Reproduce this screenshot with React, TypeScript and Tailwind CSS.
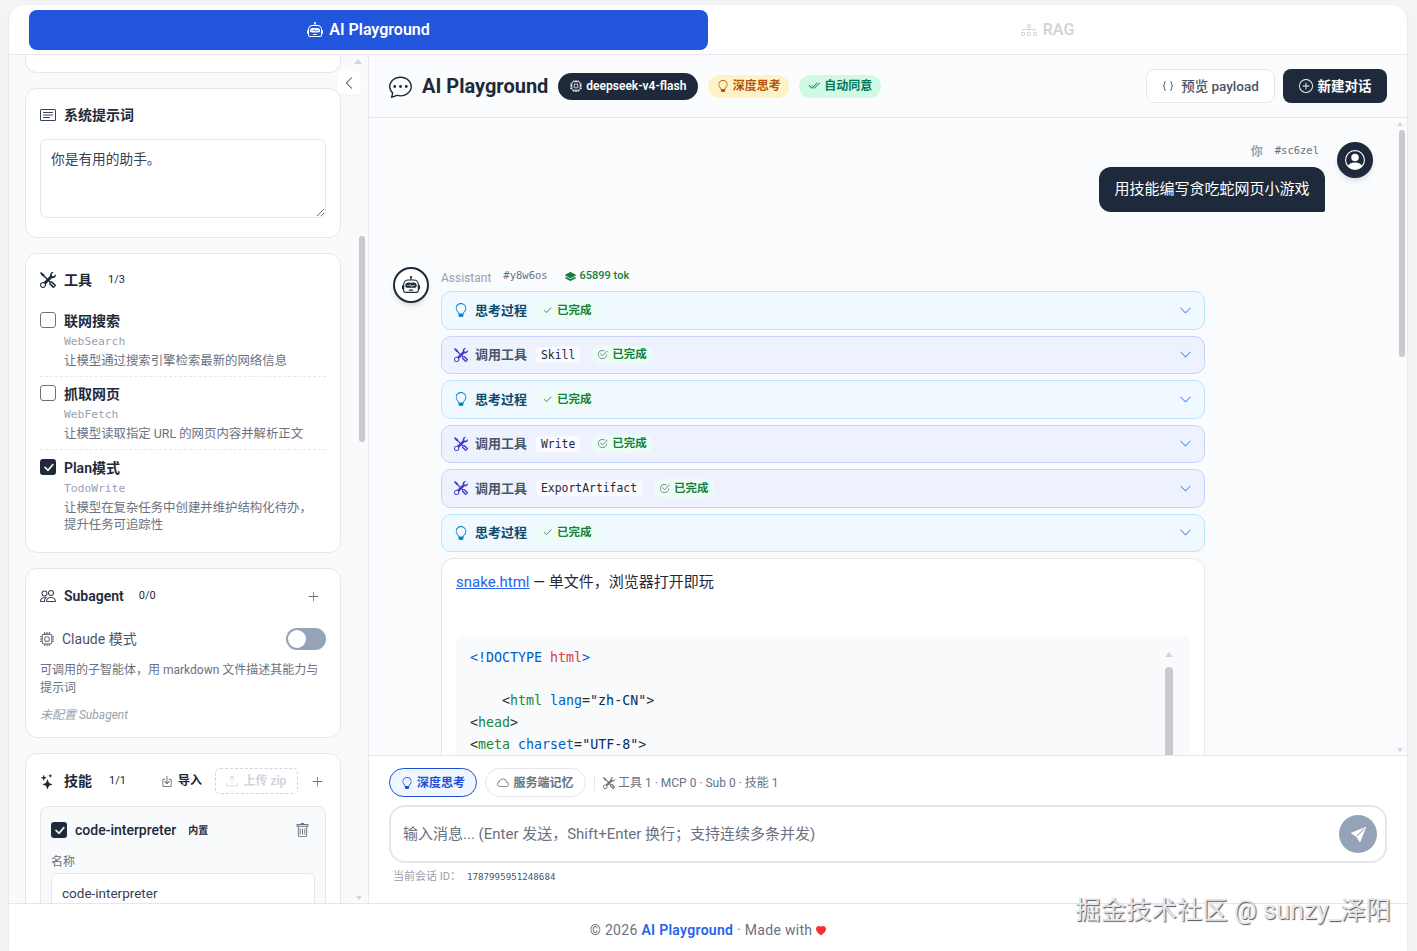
import { ReactNode } from "react";
import {
  BsBoxArrowInDown,
  BsBraces,
  BsCardText,
  BsChatDots,
  BsCheck2,
  BsCheck2All,
  BsCheck2Circle,
  BsCheckLg,
  BsChevronDown,
  BsChevronLeft,
  BsCloud,
  BsCpu,
  BsDiagram3,
  BsHeartFill,
  BsLayersFill,
  BsLightbulb,
  BsPeople,
  BsPersonCircle,
  BsPlusCircle,
  BsPlusLg,
  BsRobot,
  BsSendFill,
  BsStars,
  BsTools,
  BsTrash,
  BsUpload,
} from "react-icons/bs";

const sans = "font-['Roboto','Noto_Sans_CJK_SC',sans-serif]";
const mono = "font-['DejaVu_Sans_Mono','Noto_Sans_CJK_SC',monospace]";

function Card({ children, className }: { children: ReactNode; className?: string }) {
  return <div className={`shrink-0 rounded-[12px] border border-gray-200 bg-white ${className}`}>{children}</div>;
}

function Check({ on }: { on?: boolean }) {
  if (on) {
    return (
      <span className="flex h-4 w-4 shrink-0 items-center justify-center rounded-[3px] bg-[#1e293b] text-white">
        <BsCheckLg size={13} strokeWidth={0.8} />
      </span>
    );
  }
  return <span className="block h-4 w-4 shrink-0 rounded-[3px] border border-gray-500 bg-white" />;
}

function ToolOption(props: { name: string; id: string; desc: ReactNode; on?: boolean; last?: boolean; height: string }) {
  return (
    <div className={`flex gap-2 ${props.height} ${props.last ? "" : "border-b border-dashed border-gray-200"}`}>
      <div className="pt-[1px]">
        <Check on={props.on} />
      </div>
      <div>
        <div className="h-5 text-[14px] leading-5 font-semibold text-gray-800">{props.name}</div>
        <div className={`mt-[3px] h-4 text-[11.3px] leading-4 text-gray-400 ${mono}`}>{props.id}</div>
        <div className="mt-[2px] text-[12.4px] leading-[17px] text-gray-500">{props.desc}</div>
      </div>
    </div>
  );
}

function Sidebar() {
  return (
    <aside className="relative flex w-[360px] shrink-0 flex-col gap-[15px] overflow-hidden border-r border-gray-200 bg-[#f8fafc] pl-4 pr-[27px]">
      <div className="h-[18px] shrink-0 rounded-b-[12px] border border-t-0 border-gray-200 bg-white" />

      <Card className="h-[150px] px-[14px] pt-[16px]">
        <div className="flex h-5 items-center gap-2 text-[14px] font-semibold text-gray-800">
          <BsCardText size={16} className="text-gray-700" />
          系统提示词
        </div>
        <div className="relative mt-[14px] h-[79px] rounded-[6px] border border-gray-200 px-[10px] py-[9px] text-[13.7px] leading-5 text-gray-700">
          你是有用的助手。
          <svg className="absolute right-[1px] bottom-[1px] h-2 w-2 text-gray-500" viewBox="0 0 8 8" fill="none" stroke="currentColor">
            <path d="M1 8 8 1M5 8l3-3" />
          </svg>
        </div>
      </Card>

      <Card className="h-[300px] px-[14px] pt-[16px]">
        <div className="flex h-5 items-center gap-2 text-[14px] font-semibold text-gray-800">
          <BsTools size={16} />
          工具
          <span className="ml-[8px] rounded-full text-[11px] font-normal">1/3</span>
        </div>
        <div className="mt-[21px]">
          <ToolOption height="h-[66px]" name="联网搜索" id="WebSearch" desc="让模型通过搜索引擎检索最新的网络信息" />
          <div className="h-[7px]" />
          <ToolOption height="h-[66px]" name="抓取网页" id="WebFetch" desc="让模型读取指定 URL 的网页内容并解析正文" />
          <div className="h-[8px]" />
          <ToolOption
            height="h-[80px]"
            name="Plan模式"
            id="TodoWrite"
            on
            last
            desc={
              <>
                让模型在复杂任务中创建并维护结构化待办，
                <br />
                提升任务可追踪性
              </>
            }
          />
        </div>
      </Card>

      <Card className="h-[170px] px-[14px] pt-[17px]">
        <div className="flex h-5 items-center gap-2 text-[14px] font-semibold text-gray-800">
          <BsPeople size={16} className="text-gray-700" />
          Subagent
          <span className="ml-[7px] text-[11px] font-normal">0/0</span>
          <BsPlusLg size={13} className="ml-auto mr-[6px] text-gray-500" />
        </div>
        <div className="mt-[22px] flex h-[22px] items-center text-[14px] text-gray-600">
          <BsCpu size={14} className="mr-2" />
          Claude 模式
          <span className="ml-auto flex h-[22px] w-10 items-center rounded-full bg-[#94a3b8] pl-[2px]">
            <span className="h-[18px] w-[18px] rounded-full bg-white" />
          </span>
        </div>
        <div className="mt-[11px] text-[12px] leading-[18px] text-gray-500">可调用的子智能体，用 markdown 文件描述其能力与提示词</div>
        <div className="mt-[9px] text-[12px] leading-[18px] text-gray-400 italic">未配置 Subagent</div>
      </Card>

      <Card className="h-[300px] px-[14px] pt-[17px]">
        <div className="flex h-5 items-center text-[14px] font-semibold text-gray-800">
          <BsStars size={15} className="mr-[9px]" />
          <span className="text-[14px]">技能</span>
          <span className="ml-[17px] text-[11px] font-normal">1/1</span>
          <span className="ml-[35px] flex items-center gap-[5px] text-[12px]">
            <BsBoxArrowInDown size={12} className="text-gray-600" />
            导入
          </span>
          <span className="ml-[13px] flex h-[26px] w-[83px] items-center justify-center gap-[5px] rounded-[5px] border border-dashed border-gray-300 text-[12px] text-gray-300">
            <BsUpload size={12} />
            上传 zip
          </span>
          <BsPlusLg size={13} className="ml-[13px] text-gray-500" />
        </div>
        <div className="mt-[15px] rounded-[8px] border border-gray-200 bg-[#f8fafc] px-[10px] pt-[15px]">
          <div className="flex h-4 items-center">
            <Check on />
            <span className="ml-2 text-[14px] font-medium text-gray-800">code-interpreter</span>
            <span className="ml-3 text-[10px] font-semibold text-gray-800">内置</span>
            <BsTrash size={15} className="ml-auto mr-[5px] text-gray-500" />
          </div>
          <div className="mt-[16px] text-[12px] leading-4 text-gray-500">名称</div>
          <div className="mt-[3px] flex h-10 rounded-[5px] border border-gray-200 bg-white px-[10px] pt-[9px] text-[13.5px] leading-5 text-gray-700">code-interpreter</div>
        </div>
      </Card>

      {/* scrollbar */}
      <div className="absolute top-[4px] right-[6px] h-0 w-0 border-x-[4px] border-b-[5px] border-x-transparent border-b-gray-300" />
      <div className="absolute top-[181px] right-[3px] h-[206px] w-[6px] rounded-full bg-[#c8cacd]" />
      <div className="absolute right-[6px] bottom-[3px] h-0 w-0 border-x-[3px] border-t-[4px] border-x-transparent border-t-gray-300" />
    </aside>
  );
}

function Pill({ className, children }: { className: string; children: ReactNode }) {
  return <span className={`flex items-center justify-center rounded-full font-semibold ${className}`}>{children}</span>;
}

function Done({ icon, ml }: { icon: ReactNode; ml: string }) {
  return (
    <span className={`flex h-[18px] items-center gap-1 rounded-full bg-[#ecfdf5] px-[6px] text-[11.5px] font-semibold text-[#15803d] ${ml}`}>
      <span className="text-gray-500">{icon}</span>
      已完成
    </span>
  );
}

function Step({ kind, tool, height }: { kind: "think" | "tool"; tool?: string; height: string }) {
  const think = kind === "think";
  return (
    <div
      className={`flex ${height} shrink-0 items-center rounded-[10px] border pl-[12px] pr-[12px] ${
        think ? "border-[#bae6fd] bg-[#f0f9ff]" : "border-[#c7d2fe] bg-[#eef2ff]"
      }`}
    >
      {think ? <BsLightbulb size={14} className="text-[#0284c7]" /> : <BsTools size={14} className="text-[#4338ca]" />}
      <span className={`ml-[7px] text-[13px] font-semibold ${think ? "text-[#0c4a6e]" : "text-gray-600"}`}>{think ? "思考过程" : "调用工具"}</span>
      {tool && <span className={`ml-[9px] rounded-[4px] bg-white/70 px-[5px] text-[11.4px] leading-[16px] text-gray-800 ${mono}`}>{tool}</span>}
      {think ? <Done ml="ml-[9px]" icon={<BsCheck2 size={11} />} /> : <Done ml="ml-[11px]" icon={<BsCheck2Circle size={11} />} />}
      <BsChevronDown size={13} className="ml-auto text-[#3b82f6]" />
    </div>
  );
}

function Code() {
  const key = "text-[#005cc5]";
  const tag = "text-[#22863a]";
  const str = "text-[#032f62]";
  return (
    <div className={`mx-[14px] mt-[43px] h-[200px] rounded-t-[8px] bg-[#f8fafc] px-[14px] pt-[11px] text-[13.3px] leading-[21.7px] text-[#24292e] ${mono}`}>
      <div>
        <span className={key}>&lt;!DOCTYPE</span> <span className="text-[#d73a49]">html</span>
        <span className={key}>&gt;</span>
      </div>
      <div className="h-[21.7px]" />
      <div className="pl-8">
        &lt;<span className={tag}>html</span> <span className={key}>lang</span>=<span className={str}>"zh-CN"</span>&gt;
      </div>
      <div>
        &lt;<span className={tag}>head</span>&gt;
      </div>
      <div>
        &lt;<span className={tag}>meta</span> <span className={key}>charset</span>=<span className={str}>"UTF-8"</span>&gt;
      </div>
    </div>
  );
}

function Chat() {
  return (
    <main className="flex min-w-0 flex-1 flex-col">
      <header className="flex h-[63px] shrink-0 items-center border-b border-gray-200 bg-[#fbfcfe] pl-[20px] pr-[20px]">
        <BsChatDots size={23} className="text-gray-800" />
        <h1 className="ml-[10px] text-[20px] font-bold text-gray-800">AI Playground</h1>
        <Pill className="ml-[10px] h-[27px] w-[140px] gap-[4px] bg-[#1e293b] text-[12px] text-white">
          <BsCpu size={12} />
          deepseek-v4-flash
        </Pill>
        <Pill className="ml-[10px] h-[23px] w-[81px] gap-[4px] bg-[#fef3c7] text-[12px] text-[#b45309]">
          <BsLightbulb size={12} />
          深度思考
        </Pill>
        <Pill className="ml-[10px] h-[23px] w-[82px] gap-[4px] bg-[#d1fae5] text-[12px] text-[#047857]">
          <BsCheck2All size={12} />
          自动同意
        </Pill>
        <button className="ml-auto flex h-[34px] w-[129px] items-center justify-center gap-[7px] rounded-[8px] border border-gray-200 bg-white text-[13.5px] font-medium text-gray-600">
          <BsBraces size={12} />
          预览 payload
        </button>
        <button className="ml-2 flex h-[34px] w-[104px] items-center justify-center gap-[5px] rounded-[8px] bg-[#1e293b] text-[13.5px] font-bold text-white">
          <BsPlusCircle size={14} />
          新建对话
        </button>
      </header>

      <div className="relative min-h-0 flex-1 overflow-hidden bg-[#fafbfd] pl-[24px] pr-[34px] pt-[24px]">
        <div className="flex justify-end gap-3">
          <div className="flex flex-col items-end">
            <div className="flex h-[17px] items-center gap-[12px] pr-[6px]">
              <span className="mt-[3px] text-[12px] font-semibold text-gray-400">你</span>
              <span className={`text-[10.5px] text-gray-500 ${mono}`}>#sc6zel</span>
            </div>
            <div className="mt-[8px] flex h-[45px] w-[226px] items-center justify-center rounded-[12px] rounded-br-[2px] bg-[#1e293b] pb-[1px] text-[15px] text-white">用技能编写贪吃蛇网页小游戏</div>
          </div>
          <div className="flex h-9 w-9 items-center justify-center rounded-full bg-[#1e293b] text-white shadow-md">
            <BsPersonCircle size={20} />
          </div>
        </div>

        <div className="mt-[55px] flex gap-3">
          <div className="flex h-9 w-9 shrink-0 items-center justify-center rounded-full border-2 border-gray-800 bg-white text-gray-800 shadow-md">
            <BsRobot size={18} />
          </div>
          <div className="w-[764px]">
            <div className="-mt-[3px] flex h-[24px] items-center text-[12px]">
              <span className="mt-[3px] text-gray-400">Assistant</span>
              <span className={`ml-3 text-[10.5px] text-gray-500 ${mono}`}>#y8w6os</span>
              <span className="ml-[17px] flex items-center gap-1 text-[11px] font-medium text-[#15803d]">
                <BsLayersFill size={11} />
                65899 tok
              </span>
            </div>
            <div className="mt-[3px] flex flex-col gap-[6px]">
              <Step kind="think" height="h-[38.5px]" />
              <Step kind="tool" tool="Skill" height="h-[38.5px]" />
              <Step kind="think" height="h-[38.5px]" />
              <Step kind="tool" tool="Write" height="h-[38.5px]" />
              <Step kind="tool" tool="ExportArtifact" height="h-[38.5px]" />
              <Step kind="think" height="h-[38.5px]" />
              <div className="h-[260px] rounded-t-[12px] border border-gray-200 bg-white">
                <div className="px-[14px] pt-[12px] text-[15px] leading-[22px] text-gray-800">
                  <a className="text-[#2563eb] underline">snake.html</a> — 单文件，浏览器打开即玩
                </div>
                <Code />
              </div>
            </div>
          </div>
        </div>

        {/* code scrollbar */}
        <div className="absolute top-[534px] left-[796px] h-0 w-0 border-x-[4px] border-b-[5px] border-x-transparent border-b-gray-300" />
        <div className="absolute top-[549px] left-[796px] h-[100px] w-[8px] rounded-t-full bg-[#c8cacd]" />

        {/* page scrollbar */}
        <div className="absolute top-[4px] right-[4px] h-0 w-0 border-x-[3px] border-b-[4px] border-x-transparent border-b-gray-300" />
        <div className="absolute top-[12px] right-[2px] h-[227px] w-[6px] rounded-full bg-[#c8cacd]" />
        <div className="absolute right-[4px] bottom-[3px] h-0 w-0 border-x-[3px] border-t-[4px] border-x-transparent border-t-gray-300" />
      </div>

      <div className="h-[148px] shrink-0 border-t border-gray-200 bg-white pl-[20px] pr-[20px] pt-[12px]">
        <div className="flex h-[29px] items-center text-[12px] font-semibold">
          <span className="flex h-[29px] w-[88px] items-center justify-center gap-1 rounded-full border border-[#1d4ed8] bg-[#eff6ff] text-[#1d4ed8]">
            <BsLightbulb size={12} />
            深度思考
          </span>
          <span className="ml-2 flex h-[29px] w-[101px] items-center justify-center gap-1 rounded-full border border-gray-200 text-gray-500">
            <BsCloud size={12} />
            服务端记忆
          </span>
          <span className="ml-2 h-4 w-px bg-gray-200" />
          <span className="ml-2 flex items-center gap-[3px] font-normal text-gray-500">
            <BsTools size={12} />
            工具 1 · MCP 0 · Sub 0 · 技能 1
          </span>
        </div>
        <div className="mt-2 flex h-[58px] items-center rounded-[16px] border-2 border-gray-200 pl-[12px] pr-[8px]">
          <span className="text-[15px] text-gray-500">输入消息... (Enter 发送，Shift+Enter 换行；支持连续多条并发)</span>
          <span className="ml-auto flex h-[38px] w-[38px] items-center justify-center rounded-full bg-[#94a3b8] text-white">
            <BsSendFill size={15} />
          </span>
        </div>
        <div className="mt-[6px] flex h-4 items-center pl-[4px] text-[11px] text-gray-400">
          当前会话 ID：
          <span className={`ml-[6px] text-[9.2px] text-gray-600 ${mono}`}>1787995951248684</span>
        </div>
      </div>
    </main>
  );
}

export default function App() {
  return (
    <div className={`relative h-[951px] overflow-hidden bg-[#f3f4f6] pl-[9px] pr-[10px] pt-[5px] ${sans}`}>
      <div className="flex h-[946px] flex-col overflow-hidden rounded-t-[16px] bg-white shadow-sm">
        <nav className="grid h-[50px] shrink-0 grid-cols-2 border-b border-gray-200 px-5 pt-[5px] pb-[4px]">
          <div className="flex items-center justify-center gap-[6px] rounded-[8px] bg-[#2055dc] text-[16px] font-semibold text-white">
            <BsRobot size={16} />
            AI Playground
          </div>
          <div className="flex items-center justify-center gap-[6px] text-[16px] font-semibold text-gray-300">
            <BsDiagram3 size={16} />
            RAG
          </div>
        </nav>

        <div className="relative flex h-[848px] shrink-0">
          <Sidebar />
          <button className="absolute top-[16px] left-[328px] flex h-6 w-6 items-center justify-center rounded-[6px] bg-white text-gray-700 shadow-xs">
            <BsChevronLeft size={14} />
          </button>
          <Chat />
        </div>

        <footer className="flex h-[48px] shrink-0 items-center justify-center border-t border-gray-200 pt-[6px] text-[14px] tracking-[0.3px] text-gray-500">
          © 2026&nbsp;<span className="font-semibold text-[#2563eb]">AI Playground</span>&nbsp;· Made with&nbsp;
          <BsHeartFill size={10} className="text-red-500" />
        </footer>
      </div>
      <div className="absolute top-[893px] right-[26px] text-[25.4px] leading-[34px] text-[#e5e7eb] [text-shadow:1px_1px_1px_#4b5563]">掘金技术社区 @ sunzy_泽阳</div>
    </div>
  );
}
